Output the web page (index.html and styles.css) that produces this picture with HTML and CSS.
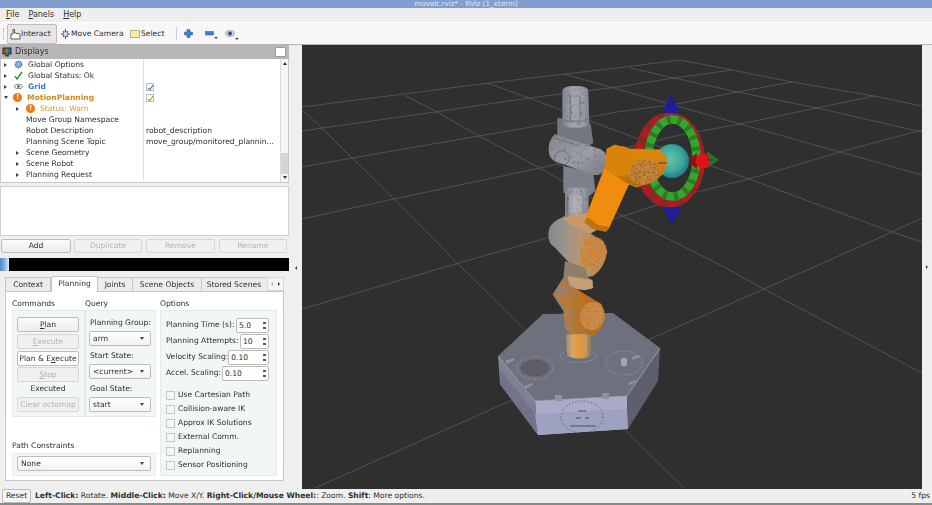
FILE: index.html
```html
<!DOCTYPE html>
<html lang="en">
<head>
<meta charset="utf-8">
<title>moveit.rviz* - RViz</title>
<link rel="stylesheet" href="styles.css">
</head>
<body>
<div class="app">
  <div class="titlebar">moveit.rviz* - RViz (1_xterm)</div>
  <div class="menubar"><span><u>F</u>ile</span><span><u>P</u>anels</span><span><u>H</u>elp</span></div>
  <div class="toolbar">
    <div class="grip"></div>
    <div class="tool active tool-interact">
      <svg width="11" height="12" viewBox="0 0 11 12"><path d="M1 11V6h2V1.500h1.500V5H6l1 .8L8 5l2 1.500V11z" fill="#fff" stroke="#333" stroke-width=".8"/></svg>
      <span>Interact</span>
    </div>
    <div class="tool tool-camera">
      <svg width="11" height="12" viewBox="0 0 11 12"><path d="M5.500 1v10M1 6h9M3 3l5 6M8 3L3 9" stroke="#555" stroke-width="1" fill="none"/><circle cx="5.500" cy="6" r="2.500" fill="#ddd" stroke="#444" stroke-width=".7"/></svg>
      <span>Move Camera</span>
    </div>
    <div class="tool tool-select">
      <span class="select-box"></span>
      <span>Select</span>
    </div>
    <div class="tool-sep"></div>
    <svg class="tb-icon tb-plus" width="9" height="9" viewBox="0 0 9 9"><path d="M3 .5h3V3h2.500v3H6v2.500H3V6H.5V3H3z" fill="#3f7fc4" stroke="#1f5f9f" stroke-width=".5"/></svg>
    <div class="tb-drop tb-minus"><svg width="9" height="5" viewBox="0 0 9 5"><rect x=".5" y=".5" width="8" height="3.500" fill="#3f7fc4" stroke="#1f5f9f" stroke-width=".5"/></svg><i></i></div>
    <div class="tb-drop tb-eye"><svg width="10" height="7" viewBox="0 0 10 7"><ellipse cx="5" cy="3.500" rx="4.500" ry="3" fill="#c8cdd8" stroke="#8a90a0" stroke-width=".5"/><circle cx="5" cy="3.500" r="2" fill="#34528a"/></svg><i></i></div>
  </div>
  <div class="main">
    <div class="left">
      <div class="dock-title">
        <svg width="10" height="10" viewBox="0 0 10 10"><rect x=".5" y=".5" width="9" height="7" fill="#222"/><rect x="1.500" y="1.500" width="2.500" height="5" fill="#d33"/><rect x="4" y="1.500" width="2.500" height="5" fill="#3a3"/><rect x="6.500" y="1.500" width="2" height="5" fill="#36c"/><rect x="3" y="8" width="4" height="1.500" fill="#333"/></svg>
        <span class="dock-name">Displays</span>
        <span class="float-btn"></span>
      </div>
      <div class="tree-wrap">
        <div class="tree">
          <div class="row"><div class="name"><i class="arr"></i><svg class="ic" width="9" height="9" viewBox="0 0 9 9"><circle cx="4.500" cy="4.500" r="3.200" fill="#8fb0dd" stroke="#3f6fb5" stroke-width="1.400" stroke-dasharray="1.400 .9"/></svg><span>Global Options</span></div><div class="val"></div></div>
          <div class="row"><div class="name"><i class="arr"></i><svg class="ic" width="9" height="9" viewBox="0 0 9 9"><path d="M1 5l2 3 5-7" fill="none" stroke="#1f8a1f" stroke-width="1.300"/></svg><span>Global Status: Ok</span></div><div class="val"></div></div>
          <div class="row"><div class="name"><i class="arr"></i><svg class="ic" width="9" height="9" viewBox="0 0 9 9"><ellipse cx="4.500" cy="4.500" rx="4" ry="2.200" fill="none" stroke="#666" stroke-width=".8"/><circle cx="4.500" cy="4.500" r="1.300" fill="#555"/></svg><span class="t-blue">Grid</span></div><div class="val"><i class="tick tick-blue"></i></div></div>
          <div class="row"><div class="name"><i class="arr open"></i><span class="warn">!</span><span class="t-orange">MotionPlanning</span></div><div class="val"><i class="tick tick-orange"></i></div></div>
          <div class="row"><div class="name in1"><i class="arr"></i><span class="warn">!</span><span class="t-warn">Status: Warn</span></div><div class="val"></div></div>
          <div class="row"><div class="name in2"><span>Move Group Namespace</span></div><div class="val"></div></div>
          <div class="row"><div class="name in2"><span>Robot Description</span></div><div class="val">robot_description</div></div>
          <div class="row"><div class="name in2"><span>Planning Scene Topic</span></div><div class="val">move_group/monitored_plannin...</div></div>
          <div class="row"><div class="name in1"><i class="arr"></i><span>Scene Geometry</span></div><div class="val"></div></div>
          <div class="row"><div class="name in1"><i class="arr"></i><span>Scene Robot</span></div><div class="val"></div></div>
          <div class="row"><div class="name in1"><i class="arr"></i><span>Planning Request</span></div><div class="val"></div></div>
        </div>
        <div class="vscroll"><i class="up"></i><b></b><i class="down"></i></div>
      </div>
      <div class="blank"></div>
      <div class="btn-row">
        <div class="btn b-add">Add</div>
        <div class="btn dis b-dup">Duplicate</div>
        <div class="btn dis b-rem">Remove</div>
        <div class="btn dis b-ren">Rename</div>
      </div>
      <div class="blackbar"><span class="blue-tab"></span><span class="black"></span></div>
      <div class="tabs">
        <span class="tab t1">Context</span>
        <span class="tab t2 cur">Planning</span>
        <span class="tab t3">Joints</span>
        <span class="tab t4">Scene Objects</span>
        <span class="tab t5">Stored Scenes</span>
        <span class="tab-arrows"><i class="ta-l"></i><i class="ta-r"></i></span>
      </div>
      <div class="pane">
        <div class="pane-left">
          <div class="cols-labels"><span class="lb-cmd">Commands</span><span>Query</span></div>
          <div class="cq">
            <div class="group commands">
              <div class="btn cbtn"><span><u>P</u>lan</span></div>
              <div class="btn cbtn dis"><span><u>E</u>xecute</span></div>
              <div class="btn cbtn">Plan &amp; E<u>x</u>ecute</div>
              <div class="btn cbtn dis c-stop"><span><u>S</u>top</span></div>
              <div class="executed">Executed</div>
              <div class="btn cbtn dis">Clear octomap</div>
            </div>
            <div class="group query">
              <div class="q-label">Planning Group:</div>
              <div class="combo">arm<i></i></div>
              <div class="q-label">Start State:</div>
              <div class="combo">&lt;current&gt;<i></i></div>
              <div class="q-label">Goal State:</div>
              <div class="combo">start<i></i></div>
            </div>
          </div>
          <div class="pc-label">Path Constraints</div>
          <div class="group pc"><div class="combo">None<i></i></div></div>
        </div>
        <div class="pane-right">
          <div class="opt-label">Options</div>
          <div class="group options">
            <div class="spin-row"><span>Planning Time (s):</span><div class="spin s1">5.0<i></i></div></div>
            <div class="spin-row"><span>Planning Attempts:</span><div class="spin s2">10<i></i></div></div>
            <div class="spin-row"><span>Velocity Scaling:</span><div class="spin s3">0.10<i></i></div></div>
            <div class="spin-row"><span>Accel. Scaling:</span><div class="spin s4">0.10<i></i></div></div>
            <div class="checks">
              <div class="chk"><i></i>Use Cartesian Path</div>
              <div class="chk"><i></i>Collision-aware IK</div>
              <div class="chk"><i></i>Approx IK Solutions</div>
              <div class="chk"><i></i>External Comm.</div>
              <div class="chk"><i></i>Replanning</div>
              <div class="chk"><i></i>Sensor Positioning</div>
            </div>
          </div>
        </div>
      </div>
    </div>
    <div class="gutter"><i></i></div>
    <svg class="view" width="620" height="444" viewBox="302 44 620 444">
      <defs>
        <filter id="speck" color-interpolation-filters="sRGB" x="0" y="0" width="100%" height="100%"><feTurbulence type="fractalNoise" baseFrequency=".9" numOctaves="2" seed="4"/><feColorMatrix values="0 0 0 0 .62  0 0 0 0 .36  0 0 0 0 .1  7 0 0 0 -3.300"/><feComposite in2="SourceAlpha" operator="in"/><feMerge><feMergeNode in="SourceGraphic"/><feMergeNode/></feMerge></filter>
        <filter id="speck3" color-interpolation-filters="sRGB" x="0" y="0" width="100%" height="100%"><feTurbulence type="fractalNoise" baseFrequency=".3" numOctaves="2" seed="4"/><feColorMatrix values="0 0 0 0 .84  0 0 0 0 .46  0 0 0 0 .08  7 0 0 0 -3.300"/><feComposite in2="SourceAlpha" operator="in"/><feMerge><feMergeNode in="SourceGraphic"/><feMergeNode/></feMerge></filter>
        <filter id="grain" color-interpolation-filters="sRGB" x="0" y="0" width="100%" height="100%"><feTurbulence type="fractalNoise" baseFrequency=".1" numOctaves="2" seed="8"/><feColorMatrix values="0 0 0 0 .47  0 0 0 0 .48  0 0 0 0 .52  4 0 0 0 -2.200"/><feComposite in2="SourceAlpha" operator="in"/><feMerge><feMergeNode in="SourceGraphic"/><feMergeNode/></feMerge></filter>
        <linearGradient id="gv" x1="0" x2="1" y1="0" y2="0"><stop offset="0" stop-color="#80828b"/><stop offset=".4" stop-color="#a4a6ae"/><stop offset=".8" stop-color="#969aa2"/><stop offset="1" stop-color="#7f818b"/></linearGradient>
        <linearGradient id="gh" x1="0" x2="1" y1="0" y2="1"><stop offset="0" stop-color="#85878f"/><stop offset=".55" stop-color="#9c9ea6"/><stop offset="1" stop-color="#787a84"/></linearGradient>
        <linearGradient id="tan" x1="0" x2="1" y1="0" y2="0"><stop offset="0" stop-color="#85878f"/><stop offset=".3" stop-color="#9c948a"/><stop offset=".55" stop-color="#b8956d"/><stop offset="1" stop-color="#b08654"/></linearGradient>
        <linearGradient id="brn" x1="0" x2="1" y1="0" y2="0"><stop offset="0" stop-color="#808085"/><stop offset=".3" stop-color="#94826c"/><stop offset=".55" stop-color="#a87030"/><stop offset="1" stop-color="#9a642a"/></linearGradient>
        <linearGradient id="col" x1="0" x2="1" y1="0" y2="0"><stop offset="0" stop-color="#a8906c"/><stop offset=".3" stop-color="#d8a468"/><stop offset=".55" stop-color="#e8942a"/><stop offset=".75" stop-color="#c99a60"/><stop offset="1" stop-color="#8a7a60"/></linearGradient>
        <linearGradient id="fore" x1="0" x2="0" y1="0" y2="1"><stop offset="0" stop-color="#e08a0c"/><stop offset=".6" stop-color="#d07e08"/><stop offset="1" stop-color="#a86a08"/></linearGradient>
        <radialGradient id="sph" cx=".45" cy=".45" r=".6"><stop offset="0" stop-color="#62c4a4"/><stop offset=".6" stop-color="#3fa69e"/><stop offset="1" stop-color="#1d7480"/></radialGradient>
      </defs>
      <rect class="bg" x="302" y="44" width="620" height="444"/>
      <g class="grid">
        <polyline points="302,106 489,82 565,73 617,67 680,59"/>
        <polyline points="302,130 435,111 529,97 617,86 674,77 732,69"/>
        <polyline points="302,166 352,157 479,135 589,116 617,111 677,103 737,91 792,81"/>
        <polyline points="302,218 394,198 540,167 680,134 740,123 817,107 874,95"/>
        <polyline points="302,308 445,266 547,237 617,217 697,191 749,178 840,151 922,129"/>
        <polyline points="315,487 512,399 650,338 764,288 814,266 892,231 922,217"/>
        <polyline points="302,109 322,127 352,157 394,198 459,264 524,328"/>
        <polyline points="625,429 684,487"/>
        <polyline points="404,94 437,111 479,135 540,167 617,212 724,266 764,288 922,372"/>
        <polyline points="487,82 529,97 617,130 714,166 749,178 892,231 922,241"/>
        <polyline points="564,73 617,88 740,123 840,151 922,174"/>
        <polyline points="630,67 674,77 737,91 817,107 922,131"/>
        <polyline points="680,59 732,69 792,81 874,95 922,105"/>
      </g>
      <!-- base -->
      <polygon points="498,355 535,400 538,434 500,383" fill="#7f8096"/>
      <polygon points="500,368 535,413 538,434 500,383" fill="#72738a"/>
      <polygon points="535,400 627,395 628,428 538,434" fill="#a9abc9"/>
      <polygon points="535,413 627,408 628,428 538,434" fill="#9fa1c0"/>
      <polygon points="627,395 660,347 658,380 628,428" fill="#5e5f6c"/>
      <polygon points="498,355 543,313 613,312 660,347 627,395 535,400" fill="#6f707e"/>
      <polyline points="498,355 535,400 627,395 660,347" fill="none" stroke="#b4b5c6" stroke-width=".7"/>
      <g fill="#8f90a0"><rect x="555" y="394" width="7" height="6"/><rect x="602" y="392" width="7" height="6"/><path d="M505 360l8-3 2 2-8 4zM524 385l8-3 1 2-8 4zM628 382l8-3 1 2-8 3zM632 356l7-2 1 2-7 3z"/></g>
      <ellipse class="hatch" cx="535" cy="367" rx="15" ry="9"/>
      <ellipse class="dash light" cx="535" cy="367" rx="18" ry="11.500"/>
      <ellipse class="dash light" cx="624" cy="362" rx="18" ry="12"/>
      <ellipse class="dash light" cx="578" cy="355" rx="18" ry="6.500"/>
      <rect x="621" y="357" width="6" height="8" rx="2" fill="#a4a5b2"/>
      <ellipse class="dash dark" cx="582" cy="416" rx="21" ry="16"/>
      <path class="medal" d="M578 410h8M576 417h5M585 417h4M570 425h26"/>
      <!-- marker -->
      <ellipse cx="669.500" cy="159" rx="31" ry="43" class="ring red"/>
      <ellipse cx="669.500" cy="159" rx="31" ry="43" class="ring red-d"/>
      <ellipse cx="672.500" cy="157" rx="24" ry="38.500" class="ring green"/>
      <ellipse cx="672.500" cy="157" rx="24" ry="38.500" class="ring green-d"/>
      <circle cx="672" cy="160" r="17" fill="url(#sph)"/>
      <polygon points="671,94 663,109 665,112 678,112 679,109" fill="#1b1f9c"/>
      <polygon points="672,223 663,208 664,206 680,206 681,208" fill="#1b1f9c"/>
      <polygon points="707,150 719,159 707,167" fill="#1b7a22"/>
      <polygon points="690,157 697,152 697,168 690,163" fill="#8a1418"/>
      <circle cx="703" cy="160" r="7.500" fill="#dc1418"/>
      <path d="M713 159h-6" stroke="#2222aa" stroke-width="1"/>
      <!-- arm traced in a 3x crop's coordinates -->
      <g transform="translate(530 80) scale(.3333)">
        <path d="M82 110L182 128 190 185 165 205 82 185z" fill="#757780"/>
        <path d="M100 255L190 275 196 330 178 345 100 335z" fill="#7e8089"/>
        <g filter="url(#grain)">
          <path d="M97 30Q97 15 135 15 175 15 175 30L178 125Q178 140 135 140 95 140 97 125z" fill="url(#gv)"/>
          <path d="M75 160Q52 180 57 215 60 235 78 242L192 282Q225 285 232 242 232 215 212 205z" fill="url(#gh)"/>
          <path d="M105 320L176 320 176 400Q150 425 105 410z" fill="url(#gv)"/>
        </g>
        <path class="detail" d="M121 45V120M150 45V115M105 120H170M112 345V400M158 345V400M95 210a22 22 0 1 0 .1 0M70 170L150 195"/>
        <path d="M118 345h40v50h-40z" fill="#b8bac1" opacity=".5"/>
        <path d="M55 460Q55 430 85 415L105 405 215 480 232 510Q225 560 190 585L160 590 75 500Q55 490 55 460z" fill="url(#tan)"/>
        <path d="M100 415Q120 400 170 395L205 445 180 458 120 430z" fill="#c79a6e"/>
        <path d="M105 540L165 560 175 590 190 600 185 625 125 625 100 590z" fill="#8f7e68"/>
        <path d="M112 585L185 596 190 620 165 628 120 622z" fill="#c4a078"/>
        <ellipse cx="190" cy="515" rx="38" ry="47" transform="rotate(15 190 515)" fill="#c4925a" filter="url(#speck3)"/>
        <path d="M68 640L100 590 115 610 215 670 225 710Q215 760 170 772L130 772 105 740 100 690z" fill="url(#brn)" filter="url(#speck3)"/>
        <path d="M108 760H182V825Q145 840 112 825z" fill="url(#col)"/>
        <path d="M125 768V825M150 770V828M168 768V822" stroke="#f0a848" stroke-width="3" opacity=".7" fill="none"/>
        <ellipse cx="187" cy="705" rx="36" ry="42" transform="rotate(15 187 705)" fill="#bc9464" filter="url(#speck3)"/>
      </g>
      <!-- orange links -->
      <path d="M606 165L622 176 628 183 608 227 598 226 586 218z" fill="#f08c0e" stroke="#f08c0e" stroke-linejoin="round" stroke-width="2"/>
      <path d="M588 216L584 221 592 228 606 231 610 226 598 224z" fill="#bc7410"/>
      <path d="M607 148L615 144 628 148 660 149 667 158 665 170 657 178 637 186 626 182 606 168z" fill="url(#fore)" stroke="#d8820c" stroke-linejoin="round"/>
      <circle cx="620" cy="160" r="15" fill="#d88408"/>
      <ellipse cx="644" cy="171" rx="15.500" ry="12.500" transform="rotate(-18 644 171)" fill="#cc8e42" filter="url(#speck)"/>
      <path d="M658 162h9" stroke="#2222aa" stroke-width=".8"/>
    </svg>
    <div class="rightbar"><i></i></div>
  </div>
  <div class="status">
    <div class="reset">Reset</div>
    <div class="hint"><b>Left-Click:</b> Rotate. <b>Middle-Click:</b> Move X/Y. <b>Right-Click/Mouse Wheel:</b>: Zoom. <b>Shift</b>: More options.</div>
    <div class="fps">5 fps</div>
  </div>
</div>
</body>
</html>
```
FILE: styles.css
```css
* { box-sizing: border-box; }
html, body { margin: 0; padding: 0; }
body { width: 932px; height: 505px; overflow: hidden; background: #efefef; }
u { text-decoration: underline; text-underline-offset: 1px; }
i { font-style: normal; display: block; }
.app { width: 932px; height: 505px; display: flex; flex-direction: column; font: 7.6px/10px "DejaVu Sans", sans-serif; color: #2e2e2e; filter: blur(.4px); }

.titlebar { height: 8px; background: #7f9dcd; color: #e4ebf7; text-align: center; font-size: 7.200px; line-height: 7px; overflow: hidden; flex: none; }
.menubar { height: 14px; flex: none; background: #eeeeee; display: flex; gap: 9px; padding: 2px 0 0 6px; font-size: 8px; }
.toolbar { height: 23px; flex: none; background: #f8f6f8; border-top: 1px solid #fff; border-bottom: 1px solid #b5b5b5; display: flex; align-items: center; padding-left: 3px; }
.grip { width: 2px; height: 12px; margin-right: 2px; border-left: 1px dotted #aaa; }
.tool { display: flex; align-items: center; height: 20px; white-space: nowrap; }
.tool-interact { width: 50px; padding-left: 2px; background: #e6e6e6; border: 1px solid #bdbdbd; border-radius: 2px; }
.tool-camera { margin-left: 2px; width: 71px; padding-left: 1px; }
.tool-select { width: 46px; }
.select-box { width: 10px; height: 8px; background: #f6eca8; border: 1px solid #b8b48a; margin-right: 1px; }
.tool-sep { width: 1px; height: 13px; background: #cfcfcf; }
.tb-icon { display: block; }
.tb-plus { margin-left: 7px; }
.tb-drop { position: relative; display: flex; align-items: center; }
.tb-drop i { position: absolute; right: -4px; bottom: -5px; border: 2px solid transparent; border-top: 2px solid #444; }
.tb-minus { margin-left: 12px; }
.tb-eye { margin-left: 11px; }

.main { flex: none; height: 444px; display: flex; }
.left { width: 289px; flex: none; display: flex; flex-direction: column; }
.dock-title { height: 14px; flex: none; background: #b8b6b6; display: flex; align-items: center; padding: 0 3px 0 2px; font-size: 8px; }
.dock-name { margin-left: 3px; flex: 1; }
.float-btn { width: 11px; height: 10px; background: #fff; border: 1px solid #999; border-radius: 1px; }
.tree-wrap { height: 124px; flex: none; background: #fff; border: 1px solid #c8c8c8; border-top: 0; display: flex; }
.tree { flex: 1; padding-top: 0; }
.row { height: 11px; display: flex; line-height: 11px; white-space: nowrap; }
.name { width: 143px; flex: none; display: flex; align-items: center; padding-left: 3px; border-right: 1px solid #dedede; }
.val { flex: 1; padding-left: 2px; overflow: hidden; display: flex; align-items: center; }
.in1 { padding-left: 15px; }
.in2 { padding-left: 25px; }
.arr { width: 0; height: 0; margin-right: 7px; border: 2.500px solid transparent; border-left: 3px solid #444; border-right: 0; }
.arr.open { border: 2.500px solid transparent; border-top: 3px solid #444; border-bottom: 0; margin-right: 5px; }
.ic { margin-right: 5px; flex: none; }
.warn { width: 9px; height: 9px; flex: none; border-radius: 50%; background: #ee7a16; color: #fff; font: bold 7px/9px "DejaVu Sans", sans-serif; text-align: center; margin-right: 5px; }
.t-blue { color: #2f7fd0; font-weight: bold; }
.t-orange { color: #d48a14; font-weight: bold; }
.t-warn { color: #d99a2e; }
.tick { width: 8px; height: 8px; border: 1px solid #bdbdbd; position: relative; }
.tick::after { content: ""; position: absolute; left: 2px; top: 0; width: 2px; height: 5px; border: solid #2f6fc0; border-width: 0 1px 1px 0; transform: rotate(35deg); }
.tick-orange::after { border-color: #c8820e; }
.vscroll { width: 8px; flex: none; border-left: 1px solid #dcdcdc; background: #f5f5f5; display: flex; flex-direction: column; align-items: center; }
.vscroll .up { margin-top: 3px; border: 2.500px solid transparent; border-bottom: 3px solid #333; border-top: 0; }
.vscroll b { flex: 1; width: 100%; margin-top: 88px; margin-bottom: 2px; background: #d5d5d5; }
.vscroll .down { margin-bottom: 3px; border: 2.500px solid transparent; border-top: 3px solid #333; border-bottom: 0; }
.blank { height: 50px; flex: none; margin-top: 3px; background: #fff; border: 1px solid #cfcfcf; }
.btn-row { flex: none; height: 14px; margin-top: 3px; display: flex; padding-left: 1px; }
.btn { height: 14px; background: linear-gradient(#fbfbfb, #ececec); border: 1px solid #bcbcbc; border-radius: 2px; text-align: center; line-height: 12px; white-space: nowrap; }
.btn.dis { color: #b2b2b2; background: #f0f0f0; border-color: #d6d6d6; }
.b-add { width: 70px; }
.b-dup { width: 68px; margin-left: 3px; }
.b-rem { width: 69px; margin-left: 4px; }
.b-ren { width: 68px; margin-left: 4px; }
.blackbar { flex: none; height: 13px; margin-top: 5px; display: flex; }
.blue-tab { width: 9px; background: linear-gradient(90deg, #4f88c8, #7fb0e0 50%, #e8e8e8); }
.black { flex: 1; background: #000; }
.tabs { flex: none; height: 16px; margin-top: 5px; padding-left: 5px; display: flex; align-items: flex-end; position: relative; z-index: 1; }
.tab { height: 15px; line-height: 14px; text-align: center; background: #ececec; border: 1px solid #c6c6c6; border-left: 0; }
.tab.cur { height: 16px; background: #fff; border: 1px solid #c6c6c6; border-bottom: 0; border-radius: 2px 2px 0 0; line-height: 14px; }
.t1 { width: 46px; border-left: 1px solid #c6c6c6; }
.t2 { width: 47px; }
.t3 { width: 35px; }
.t4 { width: 69px; }
.t5 { width: 64px; border-right: 0; }
.tab-arrows { margin-left: 1px; height: 14px; width: 17px; margin-bottom: 1px; display: flex; background: #f4f4f4; border: 1px solid #d8d8d8; align-items: center; justify-content: space-around; }
.ta-l { border: 2px solid transparent; border-right: 2px solid #aaa; border-left: 0; }
.ta-r { border: 2px solid transparent; border-left: 2px solid #333; border-right: 0; }
.pane { flex: none; height: 190px; width: 279px; margin-left: 5px; margin-top: -1px; background: #fff; border: 1px solid #c6c6c6; display: flex; padding: 7px 0 0 6px; }
.pane-left { width: 148px; flex: none; display: flex; flex-direction: column; }
.cols-labels { height: 11px; display: flex; }
.lb-cmd { width: 73px; }
.cq { display: flex; height: 107px; }
.group { background: #f1f7f3; border: 1px solid #e2ece5; }
.commands { width: 73px; padding: 6px 5px 0 4px; display: flex; flex-direction: column; gap: 2px; }
.cbtn { width: 62px; height: 15px; line-height: 13px; flex: none; }
.cbtn:nth-child(3) { background: #fff; }
.c-stop { margin-top: -1px; }
.executed { height: 10px; line-height: 10px; text-align: center; margin-bottom: 1px; }
.query { width: 71px; padding: 7px 4px 0 3px; }
.q-label { height: 12px; line-height: 10px; margin-bottom: 1px; padding-left: 1px; white-space: nowrap; }
.combo { height: 15px; margin-bottom: 5px; background: linear-gradient(#fff, #f2f2f2); border: 1px solid #bcbcbc; border-radius: 2px; line-height: 13px; padding-left: 3px; position: relative; }
.combo i { position: absolute; right: 6px; top: 5px; border: 2px solid transparent; border-top: 3px solid #444; border-bottom: 0; }
.pc-label { margin-top: 24px; height: 12px; line-height: 10px; }
.pc { width: 144px; height: 23px; padding: 2px 4px 0 4px; }
.pane-right { flex: 1; display: flex; flex-direction: column; }
.opt-label { height: 11px; }
.options { width: 117px; height: 166px; padding: 6px 7px 0 5px; }
.spin-row { display: flex; height: 16px; align-items: center; white-space: nowrap; justify-content: space-between; }
.spin { height: 15px; background: #fff; border: 1px solid #bcbcbc; border-radius: 2px; line-height: 13px; padding-left: 2px; position: relative; }
.spin i { position: absolute; right: 2px; top: 3px; width: 3px; height: 7px; border-top: 2px solid #555; border-bottom: 2px solid #555; }
.s1 { width: 33px; }
.s2 { width: 29px; }
.s3 { width: 42px; }
.s4 { width: 47px; }
.checks { margin-top: 9px; display: flex; flex-direction: column; gap: 4px; }
.chk { height: 10px; display: flex; align-items: center; line-height: 10px; white-space: nowrap; }
.chk i { width: 9px; height: 9px; margin-right: 3px; background: #f7f7f7; border: 1px solid #c6c6c6; }

.gutter { width: 13px; flex: none; display: flex; align-items: center; justify-content: center; }
.gutter i { margin-top: 1px; border: 2px solid transparent; border-right: 2px solid #444; border-left: 0; }
.view { display: block; flex: none; }
.rightbar { width: 10px; flex: none; display: flex; align-items: center; justify-content: center; }
.rightbar i { border: 2px solid transparent; border-left: 2px solid #444; border-right: 0; }
.bg { fill: #2f2f2f; }
.grid polyline { fill: none; stroke: #6a6a6a; stroke-width: .6; }
.hatch { fill: #5c5d68; stroke: #808088; stroke-width: .4; }
.dash { fill: none; stroke-width: .7; stroke-dasharray: 1.200 2; }
.dash.light { stroke: #b9bac8; }
.dash.dark { stroke: #3a3a46; }
.medal { stroke: #3a3a46; stroke-width: .8; fill: none; }
.detail { stroke: #5f616b; stroke-width: 3; fill: none; opacity: .7; }
.ring { fill: none; }
.red { stroke: #ad1c22; stroke-width: 9; }
.red-d { stroke: #7d2c28; stroke-width: 9; stroke-dasharray: 5 10; }
.green { stroke: #35a62c; stroke-width: 8.500; }
.green-d { stroke: #2f7a26; stroke-width: 8.500; stroke-dasharray: 4 7; }

.status { flex: 1; min-height: 0; background: #efefef; border-bottom: 2px solid #8a8a8a; display: flex; align-items: center; padding-left: 2px; white-space: nowrap; }
.reset { width: 29px; height: 14px; background: #f5f5f5; border: 1px solid #bcbcbc; border-radius: 2px; text-align: center; line-height: 12px; }
.hint { margin-left: 4px; flex: 1; }
.fps { padding-right: 2px; }
```
